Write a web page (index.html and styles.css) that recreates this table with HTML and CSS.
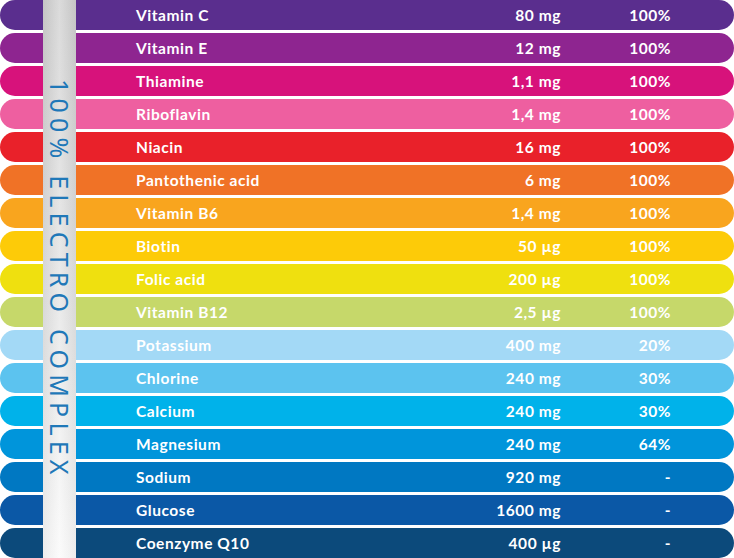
FILE: index.html
```html
<!DOCTYPE html>
<html>
<head>
<meta charset="utf-8">
<link rel="stylesheet" href="styles.css">
</head>
<body>
<div class="table">
  <div class="row c1"><span class="name">Vitamin C</span><span class="amt">80 mg</span><span class="pct">100%</span></div>
  <div class="row c2"><span class="name">Vitamin E</span><span class="amt">12 mg</span><span class="pct">100%</span></div>
  <div class="row c3"><span class="name">Thiamine</span><span class="amt">1,1 mg</span><span class="pct">100%</span></div>
  <div class="row c4"><span class="name">Riboflavin</span><span class="amt">1,4 mg</span><span class="pct">100%</span></div>
  <div class="row c5"><span class="name">Niacin</span><span class="amt">16 mg</span><span class="pct">100%</span></div>
  <div class="row c6"><span class="name">Pantothenic acid</span><span class="amt">6 mg</span><span class="pct">100%</span></div>
  <div class="row c7"><span class="name">Vitamin B6</span><span class="amt">1,4 mg</span><span class="pct">100%</span></div>
  <div class="row c8"><span class="name">Biotin</span><span class="amt">50 µg</span><span class="pct">100%</span></div>
  <div class="row c9"><span class="name">Folic acid</span><span class="amt">200 µg</span><span class="pct">100%</span></div>
  <div class="row c10"><span class="name">Vitamin B12</span><span class="amt">2,5 µg</span><span class="pct">100%</span></div>
  <div class="row c11"><span class="name">Potassium</span><span class="amt">400 mg</span><span class="pct">20%</span></div>
  <div class="row c12"><span class="name">Chlorine</span><span class="amt">240 mg</span><span class="pct">30%</span></div>
  <div class="row c13"><span class="name">Calcium</span><span class="amt">240 mg</span><span class="pct">30%</span></div>
  <div class="row c14"><span class="name">Magnesium</span><span class="amt">240 mg</span><span class="pct">64%</span></div>
  <div class="row c15"><span class="name">Sodium</span><span class="amt">920 mg</span><span class="pct">-</span></div>
  <div class="row c16"><span class="name">Glucose</span><span class="amt">1600 mg</span><span class="pct">-</span></div>
  <div class="row c17"><span class="name">Coenzyme Q10</span><span class="amt">400 µg</span><span class="pct">-</span></div>
  <div class="band"><span class="band-text">100% ELECTRO COMPLEX</span></div>
</div>
</body>
</html>
```

FILE: styles.css
```css
html, body {
  margin: 0;
  padding: 0;
  background: #ffffff;
}
body {
  width: 734px;
  height: 558px;
  overflow: hidden;
  font-family: "Lato", "Open Sans", sans-serif;
}
.table {
  position: relative;
  display: flex;
  flex-direction: column;
  gap: 3px;
  width: 734px;
}
.row {
  height: 30px;
  border-radius: 15px;
  display: grid;
  grid-template-columns: 1fr 120px 110px;
  align-items: center;
  padding: 0 63px 0 136px;
  color: #ffffff;
  font-weight: 700;
  font-size: 15.5px;
  letter-spacing: 0.55px;
}
.amt, .pct {
  text-align: right;
}
.c1 { background: #5a2e8e; }
.c2 { background: #8e2590; }
.c3 { background: #d7127b; }
.c4 { background: #ee5fa0; }
.c5 { background: #e9212a; }
.c6 { background: #f07226; }
.c7 { background: #f9a51e; }
.c8 { background: #fdcb08; }
.c9 { background: #efe00f; }
.c10 { background: #c6d86a; }
.c11 { background: #a3d9f6; }
.c12 { background: #5cc3ef; }
.c13 { background: #00b2ea; }
.c14 { background: #0095db; }
.c15 { background: #0078c2; }
.c16 { background: #0b58a6; }
.c17 { background: #0c4a7b; }

.band {
  position: absolute;
  top: 0;
  left: 43px;
  width: 33px;
  height: 558px;
  background:
    linear-gradient(90deg, rgba(0,0,0,0.05), rgba(255,255,255,0.25) 50%, rgba(0,0,0,0.05)),
    linear-gradient(180deg, #cfcfcf 0%, #dedede 40%, #f2f2f2 85%, #fafafa 100%);
  display: flex;
  justify-content: center;
}
.band-text {
  writing-mode: vertical-rl;
  margin-top: 79px;
  font-family: "Noto Sans", sans-serif;
  font-weight: 400;
  font-size: 25px;
  letter-spacing: 5.2px;
  color: #1f78b8;
  line-height: 33px;
  white-space: nowrap;
}
```
